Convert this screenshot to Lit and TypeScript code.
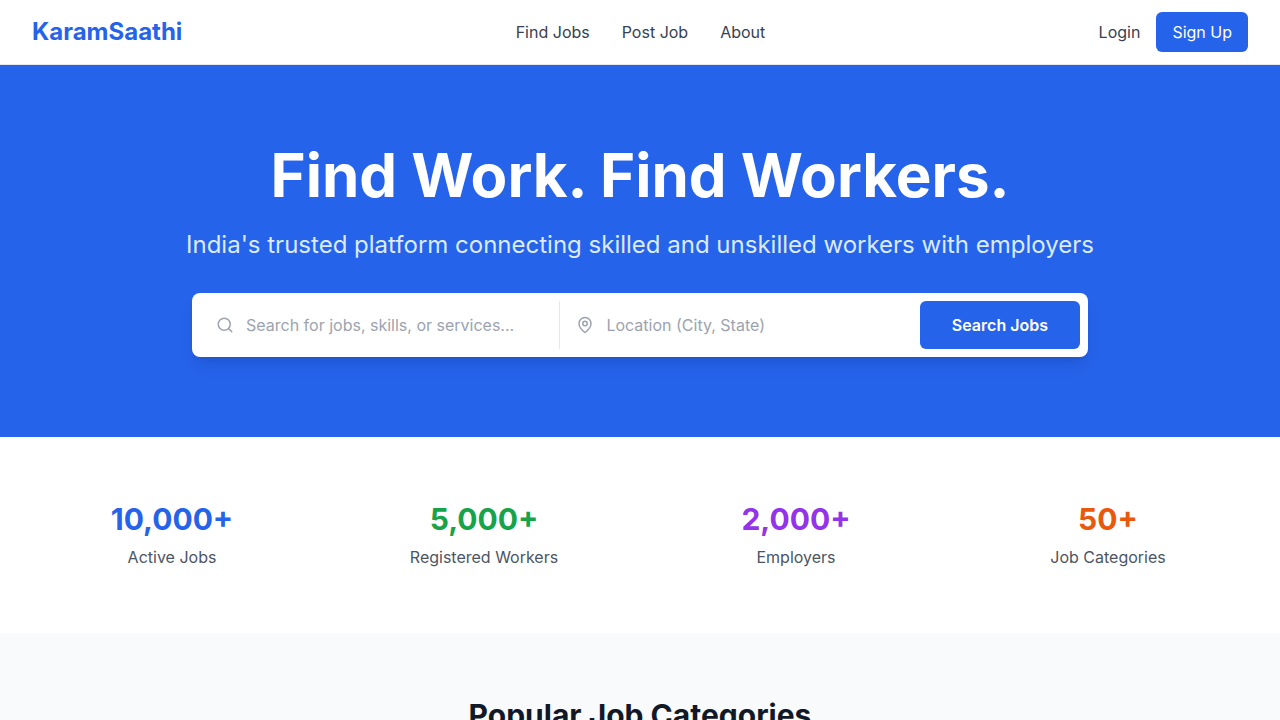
import { LitElement, html, css } from "lit";
import { customElement } from "lit/decorators.js";

@customElement("app-root")
export class AppRoot extends LitElement {
  static styles = css`
    :host {
      display: block;
      height: 720px;
      overflow: hidden;
      background: #fff;
      color: #111827;
      font-family: Inter, sans-serif;
      font-size: 16px;
      line-height: 24px;
    }
    * { box-sizing: border-box; margin: 0; padding: 0; }
    a { color: inherit; text-decoration: none; }
    button, input { font: inherit; border: 0; }
    header {
      height: 65px;
      display: flex;
      align-items: center;
      justify-content: space-between;
      padding: 0 32px;
      border-bottom: 1px solid #e5e7eb;
      color: #374151;
    }
    .logo { font-size: 24px; line-height: 32px; font-weight: 700; color: #2563eb; }
    nav { display: flex; gap: 32px; }
    .account { display: flex; align-items: center; gap: 16px; }
    .signup { background: #2563eb; color: #fff; padding: 8px 16px; border-radius: 6px; }
    .hero {
      background: #2563eb;
      color: #fff;
      padding: 80px 32px;
      text-align: center;
    }
    h1 { font-size: 60px; line-height: 60px; font-weight: 700; margin-bottom: 24px; }
    .tagline { font-size: 24px; line-height: 32px; color: #dbeafe; margin-bottom: 32px; }
    .search {
      width: 896px;
      margin: 0 auto;
      padding: 8px;
      display: flex;
      background: #fff;
      border-radius: 8px;
      box-shadow: 0 10px 15px -3px rgb(0 0 0 / 0.1), 0 4px 6px -4px rgb(0 0 0 / 0.1);
    }
    .field { flex: 1; display: flex; align-items: center; padding: 0 16px; height: 48px; }
    .field + .field { border-left: 1px solid #e5e7eb; }
    .field svg { flex: none; width: 18px; height: 18px; color: #9ca3af; margin-right: 12px; }
    input { flex: 1; min-width: 0; color: #374151; outline: none; background: transparent; }
    input::placeholder { color: #9ca3af; opacity: 1; }
    .go { background: #2563eb; color: #fff; font-weight: 600; padding: 12px 32px; border-radius: 6px; }
    .stats {
      display: grid;
      grid-template-columns: repeat(4, 1fr);
      gap: 32px;
      padding: 64px 32px;
      text-align: center;
    }
    .number { font-size: 30px; line-height: 36px; font-weight: 700; margin-bottom: 8px; }
    .blue { color: #2563eb; }
    .green { color: #16a34a; }
    .purple { color: #9333ea; }
    .orange { color: #ea580c; }
    .label { color: #4b5563; }
    .categories { background: #f9fafb; padding: 64px 32px; text-align: center; }
    h2 { font-size: 30px; line-height: 36px; font-weight: 700; }
  `;

  private stats = [
    { value: "10,000+", label: "Active Jobs", tone: "blue" },
    { value: "5,000+", label: "Registered Workers", tone: "green" },
    { value: "2,000+", label: "Employers", tone: "purple" },
    { value: "50+", label: "Job Categories", tone: "orange" },
  ];

  render() {
    return html`
      <header>
        <a class="logo" href="#">KaramSaathi</a>
        <nav><a href="#">Find Jobs</a><a href="#">Post Job</a><a href="#">About</a></nav>
        <div class="account"><a href="#">Login</a><a class="signup" href="#">Sign Up</a></div>
      </header>
      <section class="hero">
        <h1>Find Work. Find Workers.</h1>
        <p class="tagline">India's trusted platform connecting skilled and unskilled workers with employers</p>
        <div class="search">
          <div class="field">
            <svg viewBox="0 0 24 24" fill="none" stroke="currentColor" stroke-width="2" stroke-linecap="round" stroke-linejoin="round">
              <circle cx="11" cy="11" r="8" /><path d="m21 21-4.35-4.35" />
            </svg>
            <input placeholder="Search for jobs, skills, or services..." />
          </div>
          <div class="field">
            <svg viewBox="0 0 24 24" fill="none" stroke="currentColor" stroke-width="2" stroke-linecap="round" stroke-linejoin="round">
              <path d="M20 10c0 6-8 12-8 12s-8-6-8-12a8 8 0 0 1 16 0Z" /><circle cx="12" cy="10" r="3" />
            </svg>
            <input placeholder="Location (City, State)" />
          </div>
          <button class="go">Search Jobs</button>
        </div>
      </section>
      <section class="stats">
        ${this.stats.map(
          (s) => html`<div><div class="number ${s.tone}">${s.value}</div><div class="label">${s.label}</div></div>`
        )}
      </section>
      <section class="categories"><h2>Popular Job Categories</h2></section>
    `;
  }
}
